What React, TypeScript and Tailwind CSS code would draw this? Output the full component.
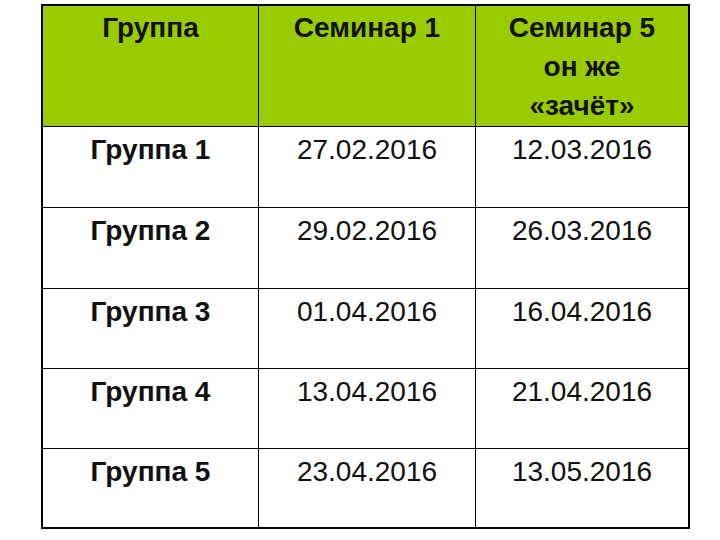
const rows = [
  { group: "Группа 1", s1: "27.02.2016", s5: "12.03.2016", h: "h-[81px]" },
  { group: "Группа 2", s1: "29.02.2016", s5: "26.03.2016", h: "h-[81px]" },
  { group: "Группа 3", s1: "01.04.2016", s5: "16.04.2016", h: "h-[80px]" },
  { group: "Группа 4", s1: "13.04.2016", s5: "21.04.2016", h: "h-[80px]" },
  { group: "Группа 5", s1: "23.04.2016", s5: "13.05.2016", h: "h-[78px]" },
];

// Column tracks measured off the slide: 216 / 217 / rest, separators included.
const cols = "grid grid-cols-[216px_217px_1fr]";

export default function App() {
  return (
    <div className="min-h-[540px] w-[720px] bg-white pt-[4px] pl-[41px] font-['Liberation_Sans',Arial,sans-serif] text-[28px] leading-[40px] text-[#111]">
      <div className="w-[649px] border-2 border-black">
        <div className={`${cols} h-[121px] border-b border-black bg-[#99cc00] font-bold leading-[39px]`}>
          <div className="border-r border-black pt-[2px] text-center">Группа</div>
          <div className="border-r border-black pt-[2px] text-center">Семинар 1</div>
          <div className="pt-[2px] text-center">
            Семинар 5
            <br />
            он же
            <br />
            «зачёт»
          </div>
        </div>
        {rows.map((r, i) => (
          <div
            key={r.group}
            className={`${cols} ${r.h} ${i < rows.length - 1 ? "border-b border-black" : ""}`}
          >
            <div className="border-r border-black pt-[3px] text-center font-bold">{r.group}</div>
            <div className="border-r border-black pt-[3px] text-center">{r.s1}</div>
            <div className="pt-[3px] text-center">{r.s5}</div>
          </div>
        ))}
      </div>
    </div>
  );
}
